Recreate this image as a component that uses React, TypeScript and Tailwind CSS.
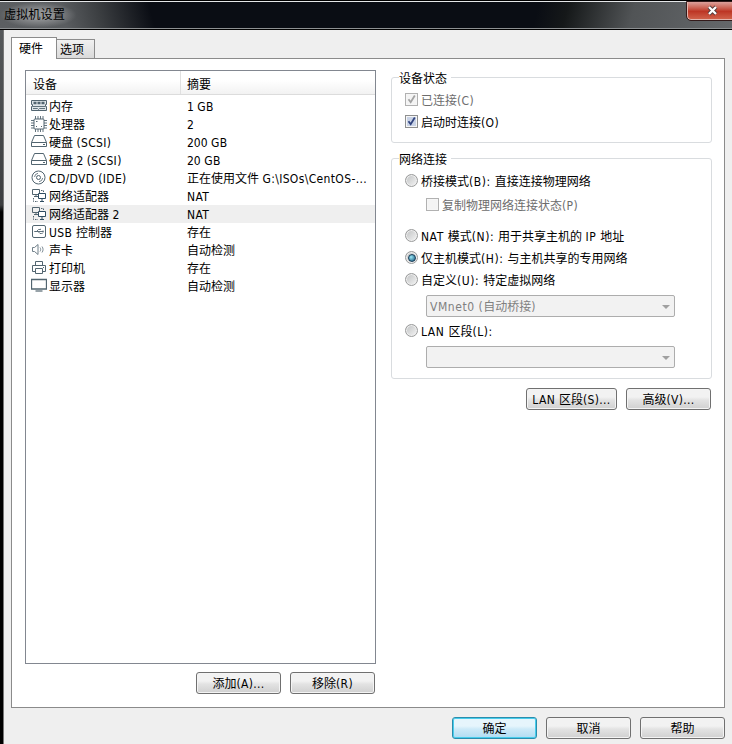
import { useState, type ReactNode } from "react"
import clsx from "clsx"

type IconName = "memory" | "cpu" | "disk" | "cd" | "network" | "usb" | "sound" | "printer" | "display"

interface Device {
  icon: IconName
  name: string
  summary: string
}

const devices: Device[] = [
  { icon: "memory", name: "内存", summary: "1 GB" },
  { icon: "cpu", name: "处理器", summary: "2" },
  { icon: "disk", name: "硬盘 (SCSI)", summary: "200 GB" },
  { icon: "disk", name: "硬盘 2 (SCSI)", summary: "20 GB" },
  { icon: "cd", name: "CD/DVD (IDE)", summary: "正在使用文件 G:\\ISOs\\CentOS-..." },
  { icon: "network", name: "网络适配器", summary: "NAT" },
  { icon: "network", name: "网络适配器 2", summary: "NAT" },
  { icon: "usb", name: "USB 控制器", summary: "存在" },
  { icon: "sound", name: "声卡", summary: "自动检测" },
  { icon: "printer", name: "打印机", summary: "存在" },
  { icon: "display", name: "显示器", summary: "自动检测" },
]

const iconShapes: Record<IconName, ReactNode> = {
  memory: (
    <>
      <path d="M.5 2.5h15v4h-1v2h1v4H.5v-4h1v-2h-1z" fill="#dfe6ea" />
      <path d="M2.5 5h3M6.5 5h3M10.5 5h3" strokeWidth="2.4" />
      <path d="M2 8.5h12M2 10.5h4.5l1 1 1-1H14" strokeWidth=".9" />
    </>
  ),
  cpu: (
    <>
      <rect x="3" y="3" width="10" height="10" rx="1" />
      <path
        d="M4.5 0v3M7 0v3M9.5 0v3M12 0v3M4.5 13v3M7 13v3M9.5 13v3M12 13v3M0 4.5h3M0 7h3M0 9.5h3M0 12h3M13 4.5h3M13 7h3M13 9.5h3M13 12h3"
        strokeWidth=".9"
      />
      <path d="M5 5.5h1.5M10 10.5h1M5 10.5h1" />
    </>
  ),
  disk: (
    <>
      <path d="M3.5 1.5h9l3 7v4H.5v-4z" />
      <path d="M.5 8.5h15M12 10.5h2" />
    </>
  ),
  cd: (
    <>
      <circle cx="7.5" cy="7.5" r="6.5" />
      <circle cx="7.5" cy="7.5" r="2" />
      <path d="M3.5 7A4.3 4.3 0 0 1 7 3.3M11.7 8a4.3 4.3 0 0 1-3.7 3.7" strokeWidth=".8" />
    </>
  ),
  network: (
    <>
      <path d="M1.5 1.5h7v5h-7zM3 8.5h4M5 6.5v2" />
      <path d="M7.5 5.5h7v5h-7zM9 13.5h4M11 10.5v3" stroke="#2f4d62" fill="#fff" />
      <path d="M10 2.5h2.5V5M2.5 10v3.5H7" strokeDasharray="1.5 1" />
    </>
  ),
  usb: (
    <>
      <rect x="1.5" y="1.5" width="13" height="12" rx="1.5" />
      <path d="M3.5 7.5h9M5.5 7.5l2-2H9M7 7.5l2 2h1.5" strokeWidth=".9" />
      <path d="M3.5 7.5h1M9 5.3h1M10.5 9.5h1M12 6.5v2" />
    </>
  ),
  sound: (
    <g stroke="#71808a">
      <path d="M1.5 5.5h2l3.5-3v10l-3.5-3h-2z" />
      <path d="M9 5.5c.9 1.2.9 2.8 0 4M11 4.5c1.4 1.8 1.4 4.2 0 6" strokeWidth=".9" />
    </g>
  ),
  printer: (
    <>
      <path d="M4.5 5.5v-4h7v4M4.5 11.5h-3v-6h13v6h-3" />
      <path d="M4.5 8.5h7v5h-7zM12 7.5h1" />
    </>
  ),
  display: (
    <>
      <path d="M.5 1.5h15v9.5H.5z" strokeWidth="1.3" />
      <path d="M4.5 13h7" strokeWidth="1.2" />
    </>
  ),
}

function DeviceIcon({ name }: { name: IconName }) {
  return (
    <svg className="size-4 shrink-0" viewBox="0 0 16 16" fill="none" stroke="#526570">
      {iconShapes[name]}
    </svg>
  )
}

// Latin runs are set a little looser than the Chinese around them
function MixedText({ text, loose }: { text: string; loose?: boolean }) {
  return text.split(/([A-Z(][\x20-\x7e]*)/).map((part, index) =>
    index % 2 ? (
      <span key={index} className={loose ? "tracking-[0.55px]" : "tracking-[0.35px]"}>
        {part}
      </span>
    ) : (
      part
    ),
  )
}

function Button({ label, className, primary }: { label: string; className?: string; primary?: boolean }) {
  return (
    <button
      className={clsx(
        "flex h-[22px] items-center justify-center rounded-[3px] border pt-0.5",
        primary
          ? "border-[#2a8dad] bg-linear-to-b from-[#e6f5fc] from-40% via-[#cdeaf8] via-55% to-[#b0dcf2] shadow-[inset_0_0_0_1px_#48cdec]"
          : "border-[#707070] bg-linear-to-b from-[#f2f2f2] from-40% via-[#e3e3e3] via-55% to-[#d0d0d0] shadow-[inset_0_0_0_1px_#f4f4f4]",
        className ?? "w-[85px]",
      )}
    >
      <span>
        <MixedText text={label} />
      </span>
    </button>
  )
}

function Checkbox({ label, checked, disabled }: { label: string; checked?: boolean; disabled?: boolean }) {
  return (
    <label className={clsx("flex h-[22px] items-center gap-[3px]", disabled && "text-[#6d6d6d]")}>
      <span
        className={clsx(
          "-mt-px flex size-[13px] items-center justify-center border shadow-[inset_0_0_0_1px_#f6f6f6]",
          disabled ? "border-[#b1b1b1] bg-[#f4f4f4]" : "border-[#8e8f8f] bg-[#c9d3e6]",
        )}
      >
        {checked && (
          <svg className="size-[11px]" viewBox="0 0 11 11" fill="none" stroke={disabled ? "#a3a3a3" : "#31447f"}>
            <path d="M2.5 5.2l2.2 3L8.8 1.5" strokeWidth="1.8" />
          </svg>
        )}
      </span>
      <span className="pt-px">
        <MixedText text={label} />
      </span>
    </label>
  )
}

function Radio({ label, checked, onSelect }: { label: string; checked: boolean; onSelect: () => void }) {
  return (
    <label className="flex h-[22px] items-center gap-[3px]" onClick={onSelect}>
      <span className="-mt-px flex size-[13px] items-center justify-center rounded-full border border-[#9a9b9b] bg-linear-to-br from-[#bfc1c2] to-[#f5f5f5] shadow-[inset_0_0_0_1px_#eeeeee]">
        {checked && (
          <span className="size-[8px] rounded-full border border-[#183c58] bg-radial-[at_35%_35%] from-[#9be8f7] to-[#125278]" />
        )}
      </span>
      <span className="pt-px">
        <MixedText text={label} loose />
      </span>
    </label>
  )
}

function Select({ value = "" }: { value?: string }) {
  return (
    <div className="mt-1 ml-[21px] flex h-[22px] w-[249px] items-center justify-between rounded-[2px] border border-[#adadad] bg-[#f2f2f2] pr-1 pl-[3px] text-[#808080]">
      <span className="pt-px">
        <MixedText text={value} loose />
      </span>
      <span className="mt-px border-x-4 border-t-4 border-x-transparent border-t-[#a0a0a0]" />
    </div>
  )
}

function Group({ title, className, children }: { title: string; className?: string; children: ReactNode }) {
  return (
    <section className={clsx("w-[321px] rounded-[3px] border border-[#d9dcdf] pl-[13px]", className)}>
      <h2 className="-mt-2 -ml-1.5 h-4 w-max bg-white pr-1 leading-[18px]">{title}</h2>
      {children}
    </section>
  )
}

const modes = [
  "桥接模式(B): 直接连接物理网络",
  "NAT 模式(N): 用于共享主机的 IP 地址",
  "仅主机模式(H): 与主机共享的专用网络",
  "自定义(U): 特定虚拟网络",
  "LAN 区段(L):",
]

export default function App() {
  const [selected, setSelected] = useState(6)
  const [mode, setMode] = useState(2)

  const radio = (index: number) => (
    <Radio label={modes[index]} checked={mode === index} onSelect={() => setMode(index)} />
  )

  return (
    <div className="flex h-[744px] w-[732px] flex-col overflow-hidden bg-[linear-gradient(#000_0,#000_1px,#55585a_30px,#3c3e40_205px,#000_212px)] font-['DejaVu_Sans_Condensed','Noto_Sans_CJK_SC',sans-serif] text-[12px] leading-[18px] text-black">
      {/* Title bar */}
      <header className="mt-px flex h-[28px] shrink-0 justify-between border-t border-b border-t-[#e4e6e8] border-b-[#8d9092] bg-[linear-gradient(75deg,#5c5f62_0%,#5a5d60_9%,#3b3e41_14%,#0a0d14_21%,#0a0d14_50%,transparent_50%),linear-gradient(105deg,#0a0d14_73%,#151819_77%,#515456_86%,#65686b_100%)]">
        <h1 className="h-[26px] bg-radial from-white/35 from-20% to-transparent to-70% pt-1 pr-3 pl-1 text-[12.2px]">
          虚拟机设置
        </h1>
        <button
          className="flex h-[18px] w-[45px] items-center justify-center rounded-bl-[4px] border-b border-l border-[#e3b6ae] bg-linear-to-b from-[#dba19b] from-0% via-[#bd3524] via-55% to-[#cf6049] outline outline-[#331a1a]"
          aria-label="关闭"
        >
          <svg className="ml-1 h-[11px] w-[13px]" viewBox="0 0 13 11" fill="none">
            <path d="M3 2l7 7M10 2L3 9" stroke="#503b3b" strokeWidth="4" />
            <path d="M3 2l7 7M10 2L3 9" stroke="#fff" strokeWidth="2.3" />
          </svg>
        </button>
      </header>

      <div className="flex flex-1 flex-col border-t border-black pl-[3px]">
        <div className="flex flex-1 flex-col border-l border-[#777] bg-[#efefef] pl-[7px]">
          <nav className="flex h-7 items-end">
            <div className="z-10 -mb-px h-[22px] w-[46px] border border-b-0 border-[#8b8b8b] bg-white pl-[7px] leading-[22px]">
              硬件
            </div>
            <div className="h-[19px] w-[38px] border border-b-0 border-l-0 border-[#8b8b8b] bg-linear-to-b from-[#f1f1f1] to-[#dadada] pl-[3px] leading-[20px]">
              选项
            </div>
          </nav>

          <main className="flex h-[650px] w-[714px] border border-[#8b8b8b] bg-white">
            <div className="mt-[11px] ml-[13px] w-[351px]">
              <div className="h-[594px] border border-[#828790] bg-white">
                <div className="flex h-6 border-b border-[#dcdcdc] bg-linear-to-b from-white from-40% to-[#f2f2f2] leading-[29px]">
                  <span className="w-[155px] border-r border-[#e0e0e0] pl-[7px]">设备</span>
                  <span className="flex-1 pl-[6px]">摘要</span>
                </div>
                <div className="mt-[2px]">
                  {devices.map((device, index) => (
                    <div
                      key={index}
                      className={clsx("flex h-[18px] items-center pl-[5px]", index === selected && "bg-[#efefef]")}
                      onClick={() => setSelected(index)}
                    >
                      <DeviceIcon name={device.icon} />
                      <span className="w-[140px] pt-px pl-[2px]">
                        <MixedText text={device.name} />
                      </span>
                      <span className="pt-px whitespace-nowrap">
                        <MixedText text={device.summary} />
                      </span>
                    </div>
                  ))}
                </div>
              </div>
              <div className="mt-2 mr-px flex justify-end gap-[9px]">
                <Button label="添加(A)..." />
                <Button label="移除(R)" />
              </div>
            </div>

            <div className="mt-[18px] ml-[15px] w-[321px]">
              <Group title="设备状态" className="h-[66px]">
                <div className="mt-[3px]">
                  <Checkbox label="已连接(C)" checked disabled />
                  <Checkbox label="启动时连接(O)" checked />
                </div>
              </Group>
              <Group title="网络连接" className="mt-[15px] h-[221px]">
                <div className="mt-[3px]">
                  {radio(0)}
                  <div className="mt-[2px] mb-[9px] ml-[21px]">
                    <Checkbox label="复制物理网络连接状态(P)" disabled />
                  </div>
                  {radio(1)}
                  {radio(2)}
                  {radio(3)}
                  <Select value="VMnet0 (自动桥接)" />
                  <div className="mt-[3px]">{radio(4)}</div>
                  <Select />
                </div>
              </Group>
              <div className="mt-[9px] mr-px flex justify-end gap-[9px]">
                <Button label="LAN 区段(S)..." className="w-[91px]" />
                <Button label="高级(V)..." />
              </div>
            </div>
          </main>

          <footer className="mt-[9px] mr-[7px] flex justify-end gap-[9px]">
            <Button label="确定" primary />
            <Button label="取消" />
            <Button label="帮助" />
          </footer>
        </div>
      </div>
    </div>
  )
}
